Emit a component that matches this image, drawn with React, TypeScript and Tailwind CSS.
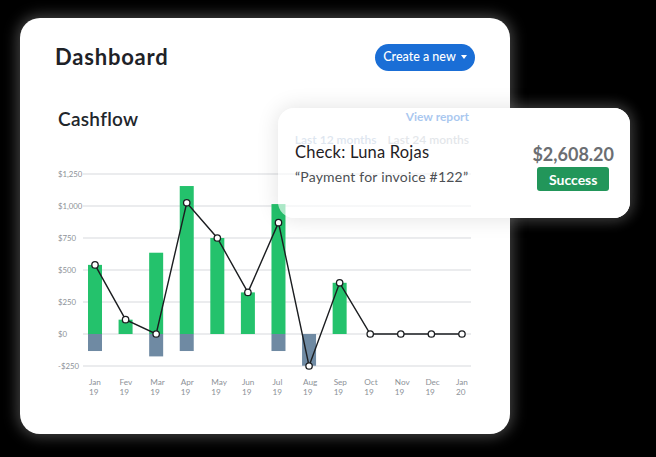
import React from 'react';

const months = [
  ['Jan', '19'], ['Fev', '19'], ['Mar', '19'], ['Apr', '19'], ['May', '19'], ['Jun', '19'], ['Jul', '19'],
  ['Aug', '19'], ['Sep', '19'], ['Oct', '19'], ['Nov', '19'], ['Dec', '19'], ['Jan', '20'],
];
const inflow = [540, 112, 635, 1156, 750, 325, 1015, 0, 400, 0, 0, 0, 0];
const outflow = [-133, 0, -175, -133, 0, 0, -133, -248, 0, 0, 0, 0, 0];
const net = [540, 112, 0, 1025, 750, 325, 870, -250, 400, 0, 0, 0, 0];
const ticks = [1250, 1000, 750, 500, 250, 0, -250];

const ZERO = 173;
const SCALE = 0.128;
const y = (v: number) => ZERO - v * SCALE;
const cx = (i: number) => 40 + i * 30.58;
const money = (v: number) => (v < 0 ? '-$' : '$') + Math.abs(v).toLocaleString('en-US');

const CashflowChart: React.FC = () => {
  const points = net.map((v, i) => `${cx(i)},${y(v)}`).join(' ');
  return (
    <svg width={420} height={240} className="block" style={{ fontFamily: 'Lato, sans-serif' }}>
      {ticks.map((t) => (
        <g key={t}>
          <line x1={28} x2={416} y1={y(t)} y2={y(t)} stroke="#e4e6e9" strokeWidth={1.3} />
          <text x={3} y={y(t) + 2.8} fontSize={7.8} fill="#8d9298">
            {money(t)}
          </text>
        </g>
      ))}
      {inflow.map((v, i) =>
        v > 0 ? <rect key={'p' + i} x={cx(i) - 7} y={y(v)} width={14} height={v * SCALE} fill="#24c26c" /> : null
      )}
      {outflow.map((v, i) =>
        v < 0 ? <rect key={'n' + i} x={cx(i) - 7} y={ZERO} width={14} height={-v * SCALE} fill="#6f8aa3" /> : null
      )}
      <polyline points={points} fill="none" stroke="#1b1d20" strokeWidth={1.4} />
      {net.map((v, i) => (
        <circle key={'c' + i} cx={cx(i)} cy={y(v)} r={3.2} fill="#fff" stroke="#1b1d20" strokeWidth={1.3} />
      ))}
      {months.map(([m, yr], i) => (
        <text key={'m' + i} x={cx(i) - 6} fontSize={8.2} fill="#8d9298">
          <tspan x={cx(i) - 6} y={224}>{m}</tspan>
          <tspan x={cx(i) - 6} y={234}>{yr}</tspan>
        </text>
      ))}
    </svg>
  );
};

export default function App() {
  return (
    <div
      className="relative w-[656px] h-[457px] bg-black pl-[20px] pt-[18px] overflow-hidden"
      style={{ fontFamily: 'Lato, "Noto Sans", sans-serif' }}
    >
      {/* glow of the popup, sits behind the dashboard card */}
      <div className="absolute left-[278px] top-[108px] w-[352px] h-[110px] rounded-[16px] bg-white shadow-[0_0_14px_3px_rgba(120,120,120,0.55)]" />

      <div className="relative w-[490px] h-[416px] rounded-[20px] bg-white px-[35px] shadow-[0_0_14px_3px_rgba(120,120,120,0.55)]">
        <div className="flex items-center justify-between pt-[25px]">
          <h1 className="text-[22px] leading-[28px] font-bold text-[#1e2227] tracking-[0.8px]">Dashboard</h1>
          <button className="flex items-center gap-[5px] h-[27px] w-[100px] justify-center rounded-full bg-[#1a6ed6] text-white text-[12.5px] font-medium">
            Create a new
            <svg width="6" height="4" viewBox="0 0 6 4">
              <path d="M0 0h6L3 4z" fill="#fff" />
            </svg>
          </button>
        </div>

        <div className="flex justify-between mt-[36px] h-[54px]">
          <h2 className="ml-[3px] text-[19px] leading-[24px] font-semibold text-[#22262b] tracking-[0.3px]">Cashflow</h2>
          <div className="flex flex-col items-end mr-[6px] mt-[2px]">
            <span className="text-[12px] leading-[16px] font-bold text-[#1a6ed6]">View report</span>
            <div className="flex gap-[11px] mt-[9px] text-[12px] leading-[12px] font-semibold">
              <span className="text-[#a8bcd6]">Last 12 months</span>
              <span className="text-[#b6bec8]">Last 24 months</span>
            </div>
          </div>
        </div>

        <CashflowChart />
      </div>

      {/* payment popup */}
      <div className="absolute left-[278px] top-[108px] w-[352px] h-[110px] rounded-[16px] bg-[linear-gradient(to_right,rgba(255,255,255,0.62)_0,rgba(255,255,255,0.62)_231px,#fff_231px)] shadow-[0_0_22px_rgba(0,0,0,0.12)] flex justify-between pl-[17px] pr-[16px] pt-[36px]">
        <div className="flex flex-col">
          <span className="text-[16.5px] leading-[16.5px] text-[#1f2124] tracking-[0.2px]">Check: Luna Rojas</span>
          <span className="mt-[6px] text-[14px] leading-[20px] text-[#4c4f53] tracking-[0.2px]">“Payment for invoice #122”</span>
        </div>
        <div className="flex flex-col items-center">
          <span className="text-[18px] leading-[20px] font-bold text-[#6b6e72]">$2,608.20</span>
          <span className="mt-[3px] h-[24px] w-[72px] flex items-center justify-center rounded-[3px] bg-[#22965a] text-white text-[14px] font-bold">
            Success
          </span>
        </div>
      </div>
    </div>
  );
}
